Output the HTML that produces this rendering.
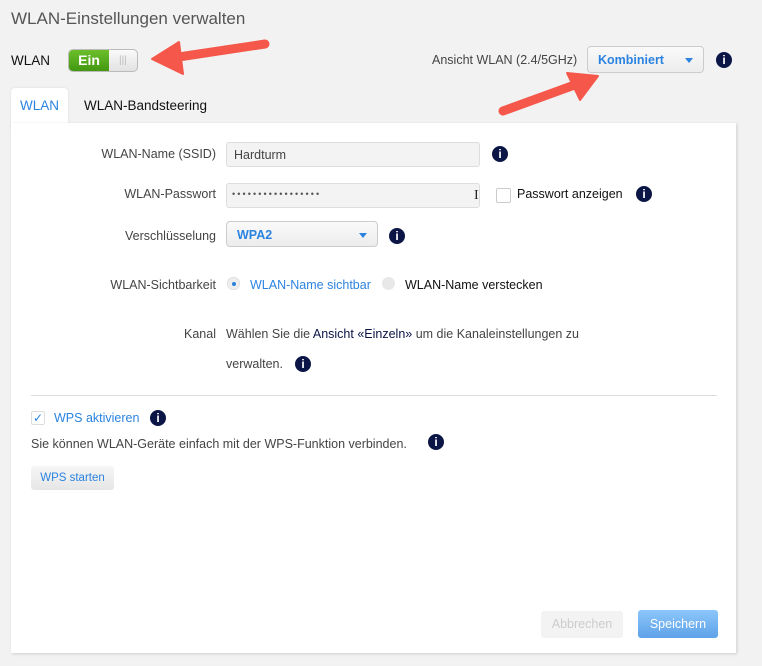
<!DOCTYPE html>
<html><head><meta charset="utf-8"><style>
body{margin:0;width:762px;height:666px;background:#f2f2f2;font-family:"Liberation Sans",sans-serif;font-size:12.5px;color:#333;position:relative;overflow:hidden}
.a{position:absolute;white-space:nowrap}
.i{position:absolute;width:16px;height:16px;border-radius:50%;background:#0b1546;color:#fff;font-weight:bold;font-size:12px;text-align:center;line-height:16px;font-family:"Liberation Sans",sans-serif}
.inp{position:absolute;background:#f3f3f3;border:1px solid #ddd;border-radius:3px;box-sizing:border-box}
.lbl{position:absolute;text-align:right;width:140px;left:76px;color:#444}
.sel{position:absolute;border:1px solid #ccc;border-radius:4px;background:linear-gradient(#fafafa,#ececec);box-sizing:border-box;color:#2b83e0;font-weight:bold}
.car{position:absolute;width:0;height:0;border-left:4px solid transparent;border-right:4px solid transparent;border-top:5px solid #2b83e0}
</style></head><body>
<div class="a" style="left:11px;top:9px;font-size:17px;color:#555">WLAN-Einstellungen verwalten</div>
<div class="a" style="left:11px;top:53px;font-size:13.5px;color:#111">WLAN</div>
<div class="a" style="left:68px;top:49px;width:70px;height:23px;border:1px solid #bbb;border-radius:5px;background:linear-gradient(#fafafa,#e2e2e2);overflow:hidden;box-sizing:border-box">
 <div style="position:absolute;left:0;top:0;width:40px;height:23px;background:linear-gradient(#6cbf2a,#3f9410);color:#fff;font-weight:bold;font-size:14px;line-height:21px;text-align:center">Ein</div>
 <div style="position:absolute;left:50px;top:5px;color:#bbb;font-size:10px">|||</div>
</div>
<div class="a" style="left:432px;top:53px;color:#444">Ansicht WLAN (2.4/5GHz)</div>
<div class="sel" style="left:587px;top:46px;width:117px;height:27px"><span class="a" style="left:10px;top:6px">Kombiniert</span><div class="car" style="left:97px;top:11px"></div></div>
<div class="i" style="left:716px;top:52px">i</div>
<div class="a" style="left:11px;top:88px;width:57px;height:40px;background:#fff;border-radius:4px 4px 0 0;box-shadow:0 0 2px rgba(0,0,0,.1)"></div>
<div class="a" style="left:20px;top:98px;color:#2b83e0;font-size:13.5px">WLAN</div>
<div class="a" style="left:84px;top:98px;color:#111;font-size:13.5px">WLAN-Bandsteering</div>
<div class="a" style="left:11px;top:123px;width:725px;height:530px;background:#fff;box-shadow:1px 1px 3px rgba(0,0,0,.15)"></div>
<div class="lbl" style="top:147px">WLAN-Name (SSID)</div>
<div class="inp" style="left:226px;top:142px;width:254px;height:25px"><span class="a" style="left:7px;top:5px;color:#444">Hardturm</span></div>
<div class="i" style="left:492px;top:146px">i</div>
<div class="lbl" style="top:187px">WLAN-Passwort</div>
<div class="inp" style="left:226px;top:183px;width:254px;height:25px"><span class="a" style="left:5px;top:5px;color:#555;font-size:9px;letter-spacing:2.1px">•••••••••••••••••</span></div>
<div class="a" style="left:474px;top:188px;font-size:14px;color:#222;font-family:'Liberation Serif',serif">I</div>
<div class="a" style="left:496px;top:188px;width:13px;height:13px;border:1px solid #ccc;border-radius:2px"></div>
<div class="a" style="left:517px;top:187px;color:#111">Passwort anzeigen</div>
<div class="i" style="left:636px;top:186px">i</div>
<div class="lbl" style="top:229px">Verschlüsselung</div>
<div class="sel" style="left:226px;top:221px;width:152px;height:26px"><span class="a" style="left:10px;top:6px">WPA2</span><div class="car" style="left:132px;top:11px"></div></div>
<div class="i" style="left:389px;top:228px">i</div>
<div class="lbl" style="top:278px">WLAN-Sichtbarkeit</div>
<div class="a" style="left:227px;top:277px;width:13px;height:13px;border-radius:50%;background:#eee;box-shadow:inset 0 0 1px #aaa"><div style="position:absolute;left:4.5px;top:4.5px;width:4px;height:4px;border-radius:50%;background:#2b83e0"></div></div>
<div class="a" style="left:250px;top:278px;color:#2b83e0">WLAN-Name sichtbar</div>
<div class="a" style="left:382px;top:277px;width:13px;height:13px;border-radius:50%;background:#e8e8e8"></div>
<div class="a" style="left:405px;top:278px;color:#111">WLAN-Name verstecken</div>
<div class="lbl" style="top:327px">Kanal</div>
<div class="a" style="left:226px;top:327px;color:#444">Wählen Sie die <span style="color:#0b1546">Ansicht «Einzeln»</span> um die Kanaleinstellungen zu</div>
<div class="a" style="left:226px;top:357px;color:#444">verwalten.</div>
<div class="i" style="left:295px;top:356px">i</div>
<div class="a" style="left:31px;top:395px;width:686px;height:1px;background:#ddd"></div>
<div class="a" style="left:31px;top:411px;width:12px;height:12px;border:1px solid #ddd;border-radius:2px;color:#2b83e0;font-size:12px;line-height:12px;text-align:center">✓</div>
<div class="a" style="left:54px;top:411px;color:#2b83e0">WPS aktivieren</div>
<div class="i" style="left:150px;top:410px">i</div>
<div class="a" style="left:31px;top:437px;color:#444">Sie können WLAN-Geräte einfach mit der WPS-Funktion verbinden.</div>
<div class="i" style="left:428px;top:434px">i</div>
<div class="a" style="left:31px;top:466px;width:83px;height:24px;border-radius:3px;background:linear-gradient(#f6f6f6,#e6e6e6);color:#2b83e0;font-size:11.5px;text-align:center;line-height:24px">WPS starten</div>
<div class="a" style="left:541px;top:611px;width:82px;height:27px;border-radius:3px;background:#f3f3f3;color:#ccc;text-align:center;line-height:27px">Abbrechen</div>
<div class="a" style="left:638px;top:610px;width:80px;height:28px;border-radius:3px;background:linear-gradient(#8cc6fb,#5fa2e8);color:#fff;text-align:center;line-height:28px">Speichern</div>
<svg class="a" style="left:0;top:0" width="762" height="666">
<g fill="#f5574a" stroke="#f5574a" stroke-linejoin="round" stroke-linecap="round">
<line x1="172" y1="58" x2="265" y2="44" stroke-width="9"/>
<polygon points="152,59 179,42 183,74" stroke-width="2"/>
<line x1="503" y1="111" x2="580" y2="83" stroke-width="9"/>
<polygon points="598,76 567,73 580,100" stroke-width="2"/>
</g></svg>
</body></html>
